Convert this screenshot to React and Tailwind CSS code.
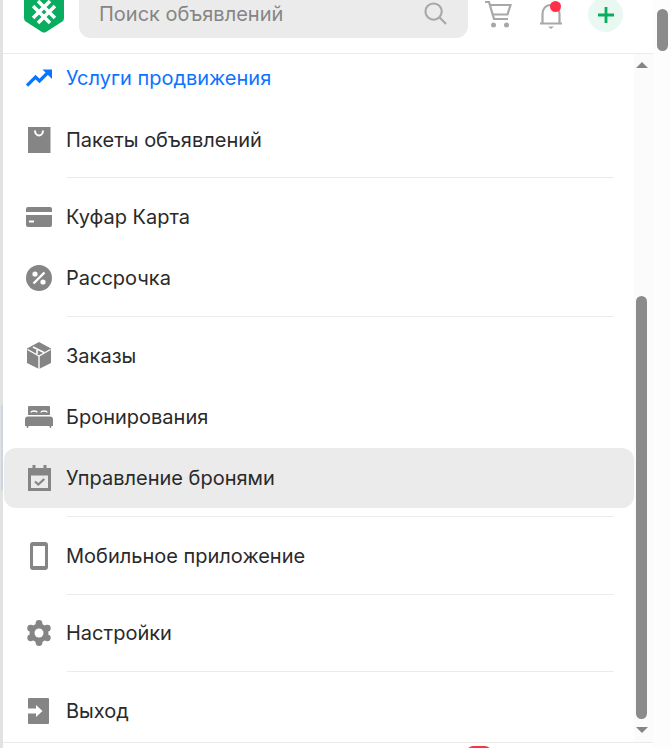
import React from "react";

const G = "#858585";

const icons = {
  trend: (
    <svg width="26" height="24" viewBox="0 0 26 24"><path d="M1 19.500 9.500 11l4 4L22 6.500" fill="none" stroke="#0a74ff" strokeWidth="3.200" /><path d="M16.500 3.500H26V13z" fill="#0a74ff" /></svg>
  ),
  bag: (
    <svg width="24" height="26" viewBox="0 0 24 26"><path d="M1 0h22.500v26H1z" fill={G} /><path d="M8 3.500c0 6.500 8 6.500 8 0" fill="none" stroke="#fff" strokeWidth="2" /></svg>
  ),
  card: (
    <svg width="26" height="20" viewBox="0 0 26 20"><path d="M2 0h22a2 2 0 0 1 2 2v3H0V2a2 2 0 0 1 2-2zM0 8h26v10a2 2 0 0 1-2 2H2a2 2 0 0 1-2-2z" fill={G} /><path d="M3 13.500h5v2H3z" fill="#fff" /></svg>
  ),
  percent: (
    <svg width="26" height="26" viewBox="0 0 26 26"><circle cx="13" cy="13" r="13" fill={G} /><path d="M7.500 18.500 18.500 7.500" stroke="#fff" strokeWidth="2.400" /><circle cx="9" cy="9" r="2.600" fill="#fff" /><circle cx="17" cy="17" r="2.600" fill="#fff" /></svg>
  ),
  box: (
    <svg width="26" height="27" viewBox="0 0 26 27"><path d="M13 0 25 6.500V21L13 27 1 21V6.500z" fill={G} /><path d="M1.500 7.500 13 14l11.500-6.500M13 14v13" fill="none" stroke="#fff" strokeWidth="1.400" /><path d="M7 5 18 10.500M11 8v4" fill="none" stroke="#fff" strokeWidth="1.600" /></svg>
  ),
  bed: (
    <svg width="28" height="22" viewBox="0 0 28 22"><path d="M3 1a1 1 0 0 1 1-1h20a1 1 0 0 1 1 1v8H3z" fill={G} /><path d="M6 6.500c0-2 6-2 6 0M16 6.500c0-2 6-2 6 0" fill="none" stroke="#fff" strokeWidth="1.300" /><path d="M3 10.500h22a3 3 0 0 1 3 3V20h-1.500l-.6 2H25l-.6-2H3.600L3 22H2l-.6-2H0v-6.500a3 3 0 0 1 3-3z" fill={G} /></svg>
  ),
  cal: (
    <svg width="24" height="26" viewBox="0 0 24 26"><path d="M1 3h4.500V0h3v3h8V0h3v3h4.500v23H1zM4 10.500V23h17V10.500z" fill={G} fillRule="evenodd" /><path d="m8 16.500 3.300 3 6-5.500" fill="none" stroke={G} strokeWidth="2.200" /></svg>
  ),
  phone: (
    <svg width="18" height="28" viewBox="0 0 18 28"><path d="M3 0h12a3 3 0 0 1 3 3v22a3 3 0 0 1-3 3H3a3 3 0 0 1-3-3V3a3 3 0 0 1 3-3zM3 4v20h12V4z" fill={G} fillRule="evenodd" /></svg>
  ),
  gear: (
    <svg width="26" height="26" viewBox="0 0 26 26"><g fill={G}><circle cx="13" cy="13" r="9.500" /><circle cx="13" cy="3.400" r="3.400" /><circle cx="13" cy="22.600" r="3.400" /><circle cx="4.700" cy="8.200" r="3.400" /><circle cx="21.300" cy="8.200" r="3.400" /><circle cx="4.700" cy="17.800" r="3.400" /><circle cx="21.300" cy="17.800" r="3.400" /></g><circle cx="13" cy="13" r="4.500" fill="#fff" /></svg>
  ),
  exit: (
    <svg width="22" height="26" viewBox="0 0 22 26"><path d="M1 0h19a1 1 0 0 1 1 1v24a1 1 0 0 1-1 1H1a1 1 0 0 1-1-1V15.500h8v3.500l6.500-6L8 7v3.500H0V1a1 1 0 0 1 1-1z" fill={G} /></svg>
  ),
};

function Row({ icon, label, blue, active }) {
  return (
    <div className={`flex h-[60px] items-center rounded-xl ${active ? "bg-[#ebebeb]" : ""}`}>
      <div className="flex w-[62px] shrink-0 items-center justify-center pl-[7px]">{icons[icon]}</div>
      <span className={`text-[20px] leading-6 ${blue ? "text-[#0a74ff]" : "text-[#2a2a2a]"}`}>{label}</span>
    </div>
  );
}

const Divider = ({ kind }) => (
  <div
    className={`ml-[63px] mr-[20px] h-px bg-[#ebebeb] ${
      kind === "first"
        ? "mb-[9px] mt-[7px]"
        : kind === "mid"
          ? "mb-[8.6px] mt-2"
          : kind === "tight"
            ? "mb-2 mt-2"
            : "mb-[9px] mt-2"
    }`}
  />
);

export default function App() {
  return (
    <div className="flex h-[748px] w-[671px] overflow-hidden bg-white" style={{ fontFamily: "Inter, 'Noto Sans', sans-serif" }}>
      <div className="w-[3px] shrink-0 bg-[#e2e2e2]">
        <div className="ml-px mt-[405px] h-[85px] w-[2px] bg-[#ccd6e4]" />
      </div>

      <div className="flex w-[650px] shrink-0 flex-col">
        <header className="flex h-[54px] shrink-0 border-b border-[#ebebeb]">
          <svg className="ml-[21px] mt-[-5px] shrink-0" width="40" height="40" viewBox="0 0 40 40">
            <path d="M2 0h36a2 2 0 0 1 2 2v21c0 2-1 3-2.500 4L22 37c-1.300.8-2.700.8-4 0L2.500 27C1 26 0 25 0 23V2a2 2 0 0 1 2-2z" fill="#09ad5f" />
            <g transform="rotate(45 20 17)" stroke="#fff" strokeWidth="3.600" fill="none">
              <path d="M16.500 5v24M23.500 5v24M8 13.500h24M8 20.500h24" />
            </g>
          </svg>
          <div className="ml-[15px] mt-[-10px] flex h-[48px] w-[389px] shrink-0 items-center justify-between rounded-xl bg-[#ebebeb] pl-5 pr-[21px]">
            <span className="text-[20px] text-[#858585]">Поиск объявлений</span>
            <svg width="23" height="23" viewBox="0 0 24 24" className="mt-[-2px]" fill="none" stroke="#a8a8a8" strokeWidth="2.200"><circle cx="10" cy="10" r="8.500" /><path d="m16 16 7 7" /></svg>
          </div>
          <svg className="ml-[15px] mt-0 shrink-0" width="30" height="30" viewBox="0 0 30 30" fill="none">
            <path d="M2 2h4l5 17h14" stroke="#a8a8a8" strokeWidth="2.200" /><path d="M7 5h20.500l-3 9.500H10" stroke="#a8a8a8" strokeWidth="2.200" /><circle cx="10.500" cy="25" r="2.500" fill="#a8a8a8" /><circle cx="23.500" cy="25" r="2.500" fill="#a8a8a8" />
          </svg>
          <div className="relative ml-[25px] h-[30px] w-[26px] shrink-0">
            <svg width="26" height="30" viewBox="0 0 26 30" fill="none">
              <path d="M2 23.500h22M4.500 23V14c0-5 3-9 8.500-9s8.500 4 8.500 9v9" stroke="#a8a8a8" strokeWidth="2.200" /><path d="M10 26.500h6l-3 2.500z" fill="#a8a8a8" />
            </svg>
            <span className="absolute left-[12px] top-[1px] h-[11px] w-[11px] rounded-full bg-[#fc3148]" />
          </div>
          <div className="ml-[24px] mt-[-3px] flex h-[35px] w-[35px] shrink-0 items-center justify-center rounded-full bg-[#e9f8f0]">
            <svg width="16" height="16" viewBox="0 0 16 16"><path d="M8 0v16M0 8h16" stroke="#09ad5f" strokeWidth="2.800" /></svg>
          </div>
        </header>

        <div className="flex min-h-0 flex-1">
          <div className="min-w-0 flex-1 overflow-hidden pl-px">
            <div className="mt-[-6px]">
              <Row icon="trend" label="Услуги продвижения" blue />
              <div className="h-[2px]" />
              <Row icon="bag" label="Пакеты объявлений" />
              <Divider kind="first" />
              <Row icon="card" label="Куфар Карта" />
              <div className="h-px" />
              <Row icon="percent" label="Рассрочка" />
              <Divider kind="mid" />
              <Row icon="box" label="Заказы" />
              <div className="h-px" />
              <Row icon="bed" label="Бронирования" />
              <div className="h-px" />
              <Row icon="cal" label="Управление бронями" active />
              <Divider />
              <Row icon="phone" label="Мобильное приложение" />
              <Divider kind="tight" />
              <Row icon="gear" label="Настройки" />
              <Divider />
              <Row icon="exit" label="Выход" />
            </div>
          </div>
          <div className="flex w-[19px] shrink-0 flex-col items-center bg-[#fbfbfb] pr-[4px]">
            <div className="mt-[8px] h-0 w-0 border-x-[6px] border-b-[6px] border-x-transparent border-b-[#858585]" />
            <div className="mt-[228px] h-[423px] w-[11px] rounded-full bg-[#8b8b8b]" />
            <div className="mt-[8px] h-0 w-0 border-x-[6px] border-t-[6px] border-x-transparent border-t-[#858585]" />
          </div>
        </div>

        <footer className="h-[6px] shrink-0 border-t border-[#ebebeb]">
          <div className="ml-[464px] mt-[3px] h-[6px] w-[24px] rounded-t-full bg-[#fc3148]" />
        </footer>
      </div>

      <div className="flex-1 bg-[#fdfdfd] pl-[4px] pt-[9px]">
        <div className="h-[42px] w-[11px] rounded-full bg-[#8b8b8b]" />
      </div>
    </div>
  );
}
